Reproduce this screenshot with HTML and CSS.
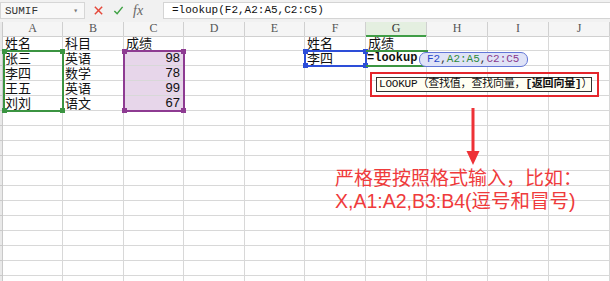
FILE: index.html
```html
<!DOCTYPE html>
<html lang="zh-CN">

<head>
    <meta charset="UTF-8">
    <title>lookup</title>
    <link rel="stylesheet" href="styles.css">
</head>

<body>
    <!-- formula bar -->
    <div class="formula-bar">
        <div class="name-box"><span>SUMIF</span><span class="caret">▾</span></div>
        <div class="fx-tools">
            <svg class="icon" viewBox="0 0 12 12"><path d="M2 2l8 8M10 2l-8 8" stroke="#e5483a" stroke-width="1.6" fill="none"/></svg>
            <svg class="icon" viewBox="0 0 12 12"><path d="M1.5 6.5l3 3 6-7.5" stroke="#3ea143" stroke-width="1.6" fill="none"/></svg>
            <span class="fx">fx</span>
        </div>
        <div class="formula-input">=lookup(F2,A2:A5,C2:C5)</div>
    </div>

    <!-- sheet -->
    <div class="sheet">
        <div class="row head">
            <div></div><div>A</div><div>B</div><div>C</div><div>D</div><div>E</div><div>F</div><div class="active">G</div><div>H</div><div>I</div><div>J</div>
        </div>
        <div class="row">
            <div></div><div>姓名</div><div>科目</div><div>成绩</div><div></div><div></div><div>姓名</div><div>成绩</div><div></div><div></div><div></div>
        </div>
        <div class="row">
            <div></div><div>张三</div><div>英语</div><div class="num">98</div><div></div><div></div><div>李四</div><div class="edit">=lookup</div><div></div><div></div><div></div>
        </div>
        <div class="row">
            <div></div><div>李四</div><div>数学</div><div class="num">78</div><div></div><div></div><div></div><div></div><div></div><div></div><div></div>
        </div>
        <div class="row">
            <div></div><div>王五</div><div>英语</div><div class="num">99</div><div></div><div></div><div></div><div></div><div></div><div></div><div></div>
        </div>
        <div class="row">
            <div></div><div>刘刘</div><div>语文</div><div class="num">67</div><div></div><div></div><div></div><div></div><div></div><div></div><div></div>
        </div>
        <div class="row"><div></div><div></div><div></div><div></div><div></div><div></div><div></div><div></div><div></div><div></div><div></div></div>
        <div class="row"><div></div><div></div><div></div><div></div><div></div><div></div><div></div><div></div><div></div><div></div><div></div></div>
        <div class="row"><div></div><div></div><div></div><div></div><div></div><div></div><div></div><div></div><div></div><div></div><div></div></div>
        <div class="row"><div></div><div></div><div></div><div></div><div></div><div></div><div></div><div></div><div></div><div></div><div></div></div>
        <div class="row"><div></div><div></div><div></div><div></div><div></div><div></div><div></div><div></div><div></div><div></div><div></div></div>
        <div class="row"><div></div><div></div><div></div><div></div><div></div><div></div><div></div><div></div><div></div><div></div><div></div></div>
        <div class="row"><div></div><div></div><div></div><div></div><div></div><div></div><div></div><div></div><div></div><div></div><div></div></div>
        <div class="row"><div></div><div></div><div></div><div></div><div></div><div></div><div></div><div></div><div></div><div></div><div></div></div>
        <div class="row"><div></div><div></div><div></div><div></div><div></div><div></div><div></div><div></div><div></div><div></div><div></div></div>
        <div class="row"><div></div><div></div><div></div><div></div><div></div><div></div><div></div><div></div><div></div><div></div><div></div></div>
        <div class="row"><div></div><div></div><div></div><div></div><div></div><div></div><div></div><div></div><div></div><div></div><div></div></div>
        <div class="row"><div></div><div></div><div></div><div></div><div></div><div></div><div></div><div></div><div></div><div></div><div></div></div>

        <!-- range highlights -->
        <div class="range range-a"><i class="tl"></i><i class="tr"></i><i class="bl"></i><i class="br"></i></div>
        <div class="range range-c"><i class="tl"></i><i class="tr"></i><i class="bl"></i><i class="br"></i></div>
        <div class="range range-f"><i class="tl"></i><i class="tr"></i><i class="bl"></i><i class="br"></i></div>
        <div class="range range-g"></div>

        <div class="args"><span class="f">F2</span>,<span class="a">A2:A5</span>,<span class="c">C2:C5</span></div>

        <div class="hint-box">
            <div class="hint">LOOKUP（查找值，查找向量，<b>[返回向量]</b>）</div>
        </div>

        <svg class="arrow" viewBox="0 0 16 60">
            <rect x="6.5" y="1" width="3" height="46" fill="#ee3237"/>
            <path d="M1.5 44h13L8 58z" fill="#ee3237"/>
        </svg>

        <div class="note">
            <div>严格要按照格式输入，比如：</div>
            <div class="note-2">X,A1:A2,B3:B4(逗号和冒号)</div>
        </div>
    </div>
</body>

</html>
```

FILE: styles.css
```css
body {
    margin: 0;
    width: 610px;
    height: 281px;
    overflow: hidden;
    background: #fff;
    font-family: "Noto Sans CJK SC", sans-serif;
    color: #111;
}

/* formula bar */
.formula-bar {
    display: flex;
    align-items: center;
    height: 22px;
    background: #f1f1f1;
    box-sizing: border-box;
    padding-bottom: 1px;
}

.name-box {
    width: 85px;
    height: 17px;
    box-sizing: border-box;
    display: flex;
    align-items: center;
    justify-content: space-between;
    padding: 0 6px 0 4px;
    background: #f8f8f8;
    border: 1px solid #d6d6d6;
    font: 11px "Liberation Mono", monospace;
    color: #333;
}

.caret {
    font-size: 8px;
    color: #777;
}

.fx-tools {
    width: 78px;
    display: flex;
    align-items: center;
    gap: 9px;
    padding-left: 8px;
    box-sizing: border-box;
}

.icon {
    width: 11px;
    height: 11px;
}

.fx {
    font: italic 14px "Liberation Serif", serif;
    color: #666;
    line-height: 14px;
}

.formula-input {
    flex: 1;
    height: 17px;
    box-sizing: border-box;
    border: 1px solid #d4d4d4;
    border-right: none;
    background: #fff;
    padding-left: 8px;
    font: 11px/15px "Liberation Mono", monospace;
    color: #111;
}

/* sheet grid */
.sheet {
    position: relative;
    height: 259px;
    overflow: hidden;
}

.row {
    display: grid;
    grid-template-columns: 3px 60px 61px 60px 61px 60px 61px 61px 61px 61px 61px;
    height: 15px;
}

.row > div {
    box-sizing: border-box;
    border-right: 1px solid #d8d8d8;
    border-bottom: 1px solid #d8d8d8;
    padding-left: 2px;
    font-size: 13px;
    line-height: 14px;
    white-space: nowrap;
}

.row > div:first-child {
    padding: 0;
    background: #e9e9e9;
    border-color: #c9c9c9;
}

.head {
    height: 14px;
}

.head > div {
    padding: 0;
    background: #f5f5f5;
    border-color: #d0d0d0;
    text-align: center;
    font: 12px/13px "Liberation Serif", serif;
    color: #555;
}

.head > div.active {
    background: #e4efe0;
    border-bottom: 2px solid #3f9d46;
    color: #333;
}

.row > div.num {
    text-align: right;
    padding-right: 3px;
    font-family: "Liberation Sans", sans-serif;
    background: #e7d6ea;
}

.row > div.edit {
    font: bold 12px/14px "Liberation Mono", monospace;
    padding-left: 1px;
}

/* reference ranges */
.range {
    position: absolute;
    box-sizing: border-box;
    border: 2px solid;
}

.range i {
    position: absolute;
    width: 5px;
    height: 5px;
    background: currentColor;
}

.range .tl { left: -3px; top: -3px; }
.range .tr { right: -3px; top: -3px; }
.range .bl { left: -3px; bottom: -3px; }
.range .br { right: -3px; bottom: -3px; }

.range-a {
    left: 3px;
    top: 28px;
    width: 61px;
    height: 62px;
    color: #3b9441;
}

.range-c {
    left: 123px;
    top: 28px;
    width: 62px;
    height: 62px;
    color: #8e3b92;
}

.range-f {
    left: 304px;
    top: 28px;
    width: 63px;
    height: 17px;
    color: #2d4ed8;
}

.range-g {
    left: 366px;
    top: 28px;
    width: 62px;
    height: 17px;
    border-color: #3b9441;
    border-left: none;
}

.args {
    position: absolute;
    left: 419px;
    top: 30px;
    height: 13px;
    padding: 0 8px 0 7px;
    background: #dfe3f7;
    border: 1px solid #6276d6;
    border-radius: 7px;
    font: 11px/13px "Liberation Mono", monospace;
    color: #333;
}

.args .f { color: #2848c9; }
.args .a { color: #2f8a3c; }
.args .c { color: #8a3a8c; }

/* function hint */
.hint-box {
    position: absolute;
    left: 370px;
    top: 50px;
    width: 229px;
    height: 25px;
    box-sizing: border-box;
    border: 2px solid #e4262c;
    padding: 3px 0 0 4px;
}

.hint {
    width: 216px;
    height: 15px;
    box-sizing: border-box;
    border: 1px solid #333;
    background: #fffff2;
    padding-left: 2px;
    font: 11px/13px "Liberation Mono", "Noto Sans CJK SC", monospace;
    white-space: nowrap;
    letter-spacing: -0.2px;
}

.hint b {
    font-weight: bold;
}

.arrow {
    position: absolute;
    left: 465px;
    top: 85px;
    width: 16px;
    height: 60px;
}

.note {
    position: absolute;
    left: 335px;
    top: 143px;
    color: #ef3b3c;
    font-size: 19px;
    line-height: 24px;
    white-space: nowrap;
}

.note-2 {
    font-family: "Liberation Sans", "Noto Sans CJK SC", sans-serif;
    font-size: 19.5px;
}
```
